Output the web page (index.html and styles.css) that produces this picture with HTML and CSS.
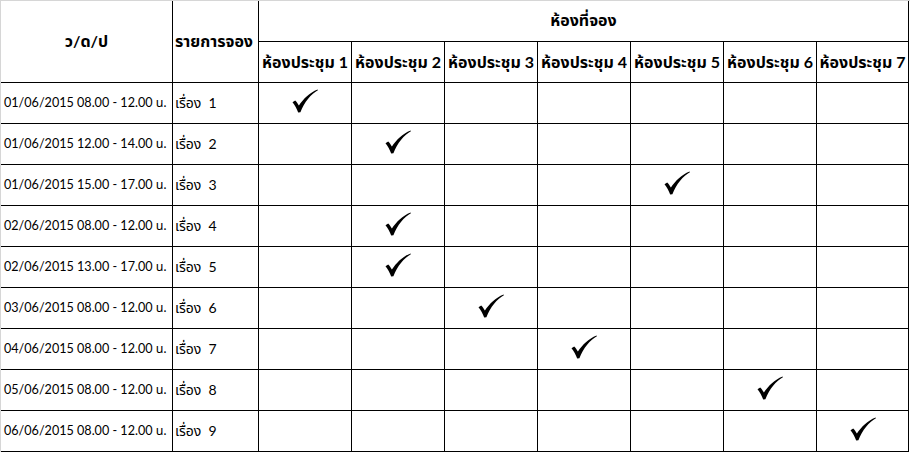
FILE: index.html
```html
<!DOCTYPE html>
<html>
<head>
<meta charset="utf-8">
<link rel="stylesheet" href="styles.css">
</head>
<body>
<svg width="0" height="0" class="defs">
  <defs>
    <symbol id="chk" viewBox="0 0 26 24">
      <path d="M0.5 13.2 L3.2 11.4 C4.6 12.6 5.8 14.6 6.9 16.6 C11.5 9.6 17.5 3.6 25.6 0.4 L25.9 1.2 C18.6 5.6 12.6 12.6 8.4 23.2 L6.2 23.4 C4.8 19.6 2.8 16 0.5 13.2 Z"/>
    </symbol>
  </defs>
</svg>
<div class="sheet">
  <div class="c h hdate">ว/ด/ป</div>
  <div class="c h hitem">รายการจอง</div>
  <div class="c h hrooms">ห้องที่จอง</div>
  <div class="c h hr">ห้องประชุม 1</div>
  <div class="c h hr">ห้องประชุม 2</div>
  <div class="c h hr">ห้องประชุม 3</div>
  <div class="c h hr">ห้องประชุม 4</div>
  <div class="c h hr">ห้องประชุม 5</div>
  <div class="c h hr">ห้องประชุม 6</div>
  <div class="c h hr">ห้องประชุม 7</div>

  <div class="c t d">01/06/2015 08.00 - 12.00 น.</div><div class="c t">เรื่อง&nbsp; 1</div>
  <div class="c k"><svg class="ck"><use href="#chk"/></svg></div><div class="c k"></div><div class="c k"></div><div class="c k"></div><div class="c k"></div><div class="c k"></div><div class="c k"></div>

  <div class="c t d">01/06/2015 12.00 - 14.00 น.</div><div class="c t">เรื่อง&nbsp; 2</div>
  <div class="c k"></div><div class="c k"><svg class="ck"><use href="#chk"/></svg></div><div class="c k"></div><div class="c k"></div><div class="c k"></div><div class="c k"></div><div class="c k"></div>

  <div class="c t d">01/06/2015 15.00 - 17.00 น.</div><div class="c t">เรื่อง&nbsp; 3</div>
  <div class="c k"></div><div class="c k"></div><div class="c k"></div><div class="c k"></div><div class="c k"><svg class="ck"><use href="#chk"/></svg></div><div class="c k"></div><div class="c k"></div>

  <div class="c t d">02/06/2015 08.00 - 12.00 น.</div><div class="c t">เรื่อง&nbsp; 4</div>
  <div class="c k"></div><div class="c k"><svg class="ck"><use href="#chk"/></svg></div><div class="c k"></div><div class="c k"></div><div class="c k"></div><div class="c k"></div><div class="c k"></div>

  <div class="c t d">02/06/2015 13.00 - 17.00 น.</div><div class="c t">เรื่อง&nbsp; 5</div>
  <div class="c k"></div><div class="c k"><svg class="ck"><use href="#chk"/></svg></div><div class="c k"></div><div class="c k"></div><div class="c k"></div><div class="c k"></div><div class="c k"></div>

  <div class="c t d">03/06/2015 08.00 - 12.00 น.</div><div class="c t">เรื่อง&nbsp; 6</div>
  <div class="c k"></div><div class="c k"></div><div class="c k"><svg class="ck"><use href="#chk"/></svg></div><div class="c k"></div><div class="c k"></div><div class="c k"></div><div class="c k"></div>

  <div class="c t d">04/06/2015 08.00 - 12.00 น.</div><div class="c t">เรื่อง&nbsp; 7</div>
  <div class="c k"></div><div class="c k"></div><div class="c k"></div><div class="c k"><svg class="ck"><use href="#chk"/></svg></div><div class="c k"></div><div class="c k"></div><div class="c k"></div>

  <div class="c t d">05/06/2015 08.00 - 12.00 น.</div><div class="c t">เรื่อง&nbsp; 8</div>
  <div class="c k"></div><div class="c k"></div><div class="c k"></div><div class="c k"></div><div class="c k"></div><div class="c k"><svg class="ck"><use href="#chk"/></svg></div><div class="c k"></div>

  <div class="c t d">06/06/2015 08.00 - 12.00 น.</div><div class="c t">เรื่อง&nbsp; 9</div>
  <div class="c k"></div><div class="c k"></div><div class="c k"></div><div class="c k"></div><div class="c k"></div><div class="c k"></div><div class="c k"><svg class="ck"><use href="#chk"/></svg></div>
</div>
</body>
</html>
```
FILE: styles.css
```css
html, body {
  margin: 0;
  padding: 0;
  background: #ffffff;
}
.defs {
  position: absolute;
  width: 0;
  height: 0;
}
.sheet {
  display: grid;
  grid-template-columns: 172px 86px repeat(6, 93px) 92px;
  grid-template-rows: repeat(11, 41px);
  width: 909px;
  border-top: 1px solid #d6d6d6;
  border-left: 1px solid #d6d6d6;
  font-family: Lato, "Liberation Sans", "Noto Sans Thai", sans-serif;
  font-size: 14px;
  color: #000;
}
.c {
  box-sizing: border-box;
  border-right: 1px solid #000;
  border-bottom: 1px solid #000;
  display: flex;
  align-items: center;
  min-width: 0;
  white-space: nowrap;
  overflow: hidden;
}
.h {
  font-weight: bold;
  font-size: 16px;
  justify-content: center;
}
.hdate {
  grid-row: span 2;
}
.hitem {
  grid-row: span 2;
  justify-content: flex-start;
  padding-left: 2px;
}
.hrooms {
  grid-column: span 7;
}
.hr {
  padding-top: 1px;
}
.t {
  padding-left: 2px;
  padding-top: 1px;
}
.d {
  font-size: 12.6px;
  padding-left: 3px;
}
.k {
  justify-content: center;
  padding-bottom: 4px;
}
.ck {
  width: 26px;
  height: 24px;
  fill: #000;
}
```
